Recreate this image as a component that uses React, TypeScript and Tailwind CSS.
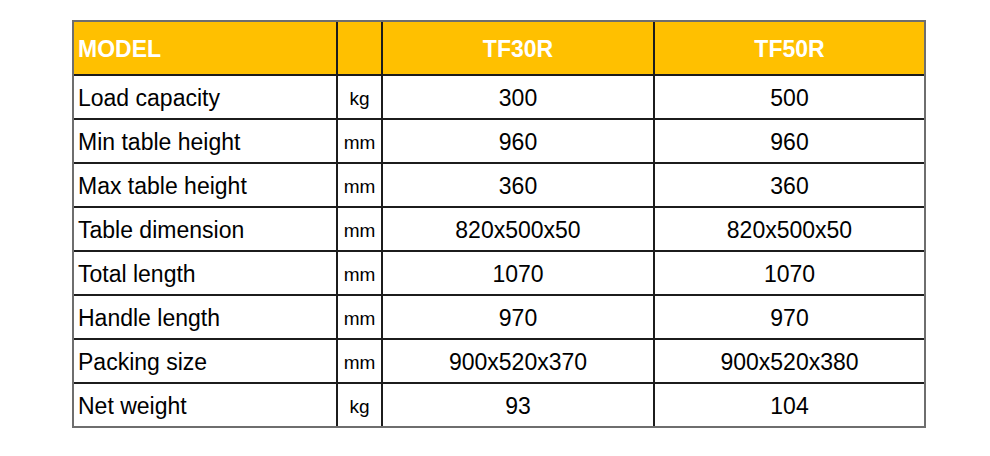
import React from "react";

const rows: [string, string, string, string][] = [
  ["Load capacity", "kg", "300", "500"],
  ["Min table height", "mm", "960", "960"],
  ["Max table height", "mm", "360", "360"],
  ["Table dimension", "mm", "820x500x50", "820x500x50"],
  ["Total length", "mm", "1070", "1070"],
  ["Handle length", "mm", "970", "970"],
  ["Packing size", "mm", "900x520x370", "900x520x380"],
  ["Net weight", "kg", "93", "104"],
];

export default function App() {
  return (
    <div
      className="w-[990px] h-[456px] bg-white pt-[20px] pl-[72px]"
      style={{ fontFamily: '"Liberation Sans", Arial, sans-serif' }}
    >
      <div className="w-[854px] border-2 border-[#6e6e6e]">
        {/* header */}
        <div className="grid grid-cols-[264px_45px_272px_269px] h-[54px] bg-[#ffc000] text-white font-bold text-[23px] border-b-2 border-[#1c1c1c]">
          <div className="flex items-center pl-[4px] pt-[2px] border-r-2 border-[#1c1c1c]">MODEL</div>
          <div className="border-r-2 border-[#1c1c1c]" />
          <div className="flex items-center justify-center pt-[2px] border-r-2 border-[#1c1c1c]">TF30R</div>
          <div className="flex items-center justify-center pt-[2px]">TF50R</div>
        </div>
        {rows.map((r, i) => (
          <div
            key={r[0]}
            className={
              i < rows.length - 1
                ? "grid grid-cols-[264px_45px_272px_269px] h-[44px] border-b-2 border-[#1c1c1c] text-black"
                : "grid grid-cols-[264px_45px_272px_269px] h-[42px] text-black"
            }
          >
            <div className="flex items-center pl-[4px] pt-[2px] text-[23px] border-r-2 border-[#1c1c1c]">{r[0]}</div>
            <div className="flex items-center justify-center pt-[4px] text-[19px] border-r-2 border-[#1c1c1c]">{r[1]}</div>
            <div className="flex items-center justify-center pt-[2px] text-[23px] border-r-2 border-[#1c1c1c]">{r[2]}</div>
            <div className="flex items-center justify-center pt-[2px] text-[23px]">{r[3]}</div>
          </div>
        ))}
      </div>
    </div>
  );
}
